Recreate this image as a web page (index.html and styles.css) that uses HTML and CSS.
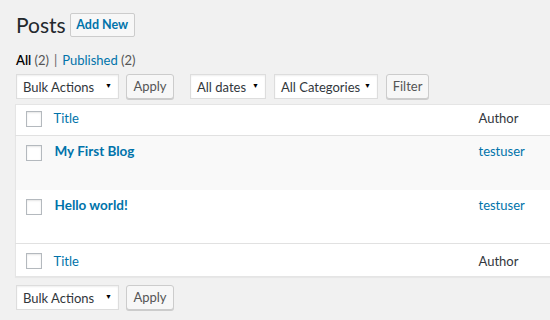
FILE: index.html
```html
<!DOCTYPE html>
<html lang="en">
<head>
    <meta charset="UTF-8">
    <meta name="viewport" content="width=device-width, initial-scale=1.0">
    <title>Posts</title>
    <link rel="stylesheet" href="styles.css">
</head>
<body>
    <div class="wrap">
        <div class="page-head">
            <h1>Posts</h1>
            <a href="#" class="page-title-action">Add New</a>
        </div>

        <ul class="subsubsub">
            <li class="current">All <span class="count">(2)</span></li>
            <li class="sep">|</li>
            <li><a href="#">Published</a> <span class="count">(2)</span></li>
        </ul>

        <div class="tablenav">
            <div class="select bulk">Bulk Actions <span class="arrow">▼</span></div>
            <button class="button apply">Apply</button>
            <div class="select dates">All dates <span class="arrow">▼</span></div>
            <div class="select cats">All Categories <span class="arrow">▼</span></div>
            <button class="button filter">Filter</button>
        </div>

        <table class="posts">
            <thead>
                <tr>
                    <td class="check"><span class="checkbox"></span></td>
                    <th class="col-title"><a href="#">Title</a></th>
                    <th class="col-author">Author</th>
                </tr>
            </thead>
            <tbody>
                <tr class="alt">
                    <td class="check"><span class="checkbox"></span></td>
                    <td class="col-title"><a href="#" class="row-title">My First Blog</a></td>
                    <td class="col-author"><a href="#">testuser</a></td>
                </tr>
                <tr>
                    <td class="check"><span class="checkbox"></span></td>
                    <td class="col-title"><a href="#" class="row-title">Hello world!</a></td>
                    <td class="col-author"><a href="#">testuser</a></td>
                </tr>
            </tbody>
            <tfoot>
                <tr>
                    <td class="check"><span class="checkbox"></span></td>
                    <th class="col-title"><a href="#">Title</a></th>
                    <th class="col-author">Author</th>
                </tr>
            </tfoot>
        </table>

        <div class="tablenav bottom">
            <div class="select bulk">Bulk Actions <span class="arrow">▼</span></div>
            <button class="button apply">Apply</button>
        </div>
    </div>
</body>
</html>
```

FILE: styles.css
```css
:root {
    --link-color: #0073aa;
    --text-color: #23282d;
    --muted: #555;
    --border-color: #e1e1e1;
    --bg-color: #f1f1f1;
}

* {
    margin: 0;
    padding: 0;
    box-sizing: border-box;
    font-family: Lato, 'Open Sans', sans-serif;
}

html, body {
    overflow: hidden;
}

body {
    background-color: var(--bg-color);
    color: var(--text-color);
    font-size: 13px;
    line-height: 1.4;
}

a {
    color: var(--link-color);
    text-decoration: none;
}

.wrap {
    padding: 13px 0 0 15px;
}

.page-head {
    display: flex;
    align-items: center;
    gap: 4px;
    padding-left: 1px;
    height: 24px;
}

.page-head h1 {
    font-size: 21px;
    font-weight: 400;
    line-height: 1.15;
    color: var(--text-color);
}

.page-title-action {
    display: block;
    width: 65px;
    height: 24px;
    line-height: 22px;
    text-align: center;
    border: 1px solid #ccc;
    border-radius: 2px;
    background-color: #f7f7f7;
    font-weight: 700;
    font-size: 12.5px;
}

.subsubsub {
    list-style: none;
    display: flex;
    gap: 5px;
    margin: 14px 0 0 1px;
    color: #666;
}

.subsubsub .current {
    color: #000;
    font-weight: 600;
}

.subsubsub .count {
    color: var(--muted);
    font-weight: 400;
}

.tablenav {
    display: flex;
    align-items: center;
    gap: 8px;
    margin: 5px 0 4px 1px;
    height: 25px;
}

.tablenav.bottom {
    margin-top: 8px;
}

.select {
    position: relative;
    height: 25px;
    border: 1px solid #ddd;
    background-color: #fff;
    box-shadow: inset 0 1px 2px rgba(0, 0, 0, 0.07);
    padding: 3px 0 0 6px;
    color: #32373c;
}

.select .arrow {
    position: absolute;
    right: 6px;
    top: 6px;
    font-size: 7px;
    color: #000;
}

.bulk { width: 103px; margin-right: -1px; }
.dates { width: 76px; margin-left: 8px; }
.cats { width: 104px; }

.button {
    height: 25px;
    border: 1px solid #ccc;
    border-radius: 3px;
    background-color: #f7f7f7;
    box-shadow: 0 1px 0 #ccc;
    color: var(--muted);
    font-size: 13px;
    padding: 0 0 1px;
}

.apply { width: 48px; }
.filter { width: 43px; }

.posts {
    width: 560px;
    border-collapse: collapse;
    background-color: #fff;
    border: 1px solid #e5e5e5;
    box-shadow: 0 1px 1px rgba(0, 0, 0, 0.04);
    margin-top: 5px;
}

.posts th,
.posts td {
    text-align: left;
    font-weight: 400;
    vertical-align: top;
}

.posts thead td,
.posts thead th {
    height: 31px;
    padding: 4px 10px 0;
}

.posts tfoot td,
.posts tfoot th {
    height: 33px;
    padding: 8px 10px 0;
}

.posts thead tr {
    border-bottom: 1px solid var(--border-color);
}

.posts tfoot tr {
    border-top: 1px solid var(--border-color);
}

.posts tbody td {
    height: 54px;
    padding: 6px 10px 0;
}

.posts .check {
    width: 38px;
    padding: 6px 0 0 10px;
}

.posts tfoot .check {
    padding-top: 9px;
}

.posts tbody .check {
    padding-top: 9px;
}

.posts .col-title {
    padding-left: 0;
}

.posts tbody .col-title {
    padding-left: 1px;
}

.posts tbody tr.alt {
    background-color: #f9f9f9;
}

.checkbox {
    display: block;
    width: 16px;
    height: 16px;
    border: 1px solid #b4b9be;
    background-color: #fff;
    box-shadow: inset 0 1px 2px rgba(0, 0, 0, 0.1);
}

.row-title {
    font-size: 13.5px;
    font-weight: 700;
}

.posts .col-author {
    width: 106px;
    color: #32373c;
}
```
